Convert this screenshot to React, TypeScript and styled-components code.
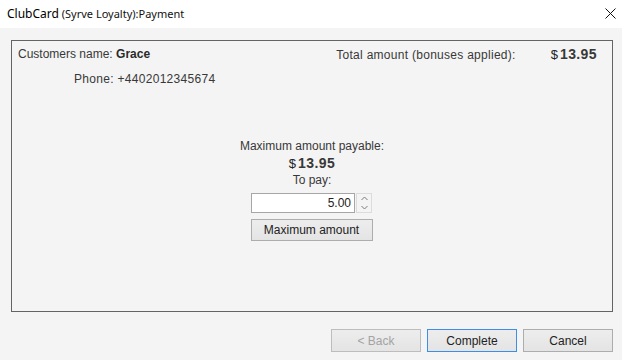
import styled, { createGlobalStyle } from "styled-components";

const GlobalStyle = createGlobalStyle`
  html, body {
    margin: 0;
    padding: 0;
    background: #f4f4f4;
  }
  body {
    font-family: "Liberation Sans", Arial, sans-serif;
    font-size: 12px;
    color: #383838;
  }
`;

function CloseIcon() {
  return (
    <svg width="11" height="11" viewBox="0 0 11 11">
      <path d="M0.5 0.5 L10.5 10.5 M10.5 0.5 L0.5 10.5" stroke="#111" strokeWidth="1" />
    </svg>
  );
}

function Money({ value }: { value: string }) {
  return (
    <Amount>
      <Currency>$</Currency>
      <AmountValue>{value}</AmountValue>
    </Amount>
  );
}

function App() {
  return (
    <Window>
      <GlobalStyle />
      <TitleBar>
        <Title>
          <AppName>ClubCard</AppName> (Syrve Loyalty):Payment
        </Title>
        <CloseButton>
          <CloseIcon />
        </CloseButton>
      </TitleBar>

      <Body>
        <Panel>
          <TopRow>
            <span>
              Customers name: <Strong>Grace</Strong>
            </span>
            <TotalBox>
              <TotalLabel>Total amount (bonuses applied):</TotalLabel>
              <Money value="13.95" />
            </TotalBox>
          </TopRow>
          <PhoneLine>Phone: +4402012345674</PhoneLine>

          <PayBlock>
            <Line>Maximum amount payable:</Line>
            <Line>
              <Money value="13.95" />
            </Line>
            <Line>To pay:</Line>
            <SpinRow>
              <NumberInput>5.00</NumberInput>
              <Spinner>
                <SpinArrow>
                  <svg width="7" height="5" viewBox="0 0 7 5">
                    <path d="M0.5 4 L3.5 1 L6.5 4" stroke="#7a7a7a" fill="none" />
                  </svg>
                </SpinArrow>
                <SpinArrow>
                  <svg width="7" height="5" viewBox="0 0 7 5">
                    <path d="M0.5 1 L3.5 4 L6.5 1" stroke="#7a7a7a" fill="none" />
                  </svg>
                </SpinArrow>
              </Spinner>
            </SpinRow>
            <MaxButton>Maximum amount</MaxButton>
          </PayBlock>
        </Panel>

        <Footer>
          <DialogButton disabled>&lt; Back</DialogButton>
          <DialogButton $primary>Complete</DialogButton>
          <DialogButton>Cancel</DialogButton>
        </Footer>
      </Body>
    </Window>
  );
}

export default App;

const Window = styled.div`
  width: 622px;
  height: 360px;
  display: flex;
  flex-direction: column;
  background: #f4f4f4;
  overflow: hidden;
`;

const TitleBar = styled.div`
  height: 28px;
  background: #fff;
  display: flex;
  align-items: center;
  justify-content: space-between;
  padding: 0 6px 0 7px;
  box-sizing: border-box;
`;

const Title = styled.div`
  font-family: "Noto Sans", "Open Sans", sans-serif;
  font-size: 11px;
  color: #111;
  margin-top: -2px;
`;

const AppName = styled.span`
  font-size: 12px;
  color: #000;
`;

const CloseButton = styled.div`
  width: 11px;
  height: 11px;
  margin-top: -2px;
  display: flex;
`;

const Body = styled.div`
  flex: 1;
  display: flex;
  flex-direction: column;
  padding: 12px 9px 0 11px;
`;

const Panel = styled.div`
  height: 272px;
  box-sizing: border-box;
  border: 1px solid #646464;
  padding: 5px 15px 0 6px;
  display: flex;
  flex-direction: column;
`;

const TopRow = styled.div`
  display: flex;
  justify-content: space-between;
  line-height: 16px;
`;

const Strong = styled.b`
  color: #2a2a2a;
`;

const TotalBox = styled.div`
  display: flex;
  align-items: center;
  gap: 35px;
`;

const TotalLabel = styled.span`
  letter-spacing: 0.28px;
`;

const Amount = styled.span`
  display: inline-flex;
  align-items: baseline;
  gap: 2px;
`;

const Currency = styled.span`
  font-size: 13px;
  color: #222;
`;

const AmountValue = styled.span`
  font-weight: bold;
  font-size: 14px;
  color: #383838;
  letter-spacing: 0.4px;
`;

const PhoneLine = styled.div`
  margin-top: 8px;
  padding-left: 56px;
  line-height: 16px;
  letter-spacing: 0.3px;
`;

const PayBlock = styled.div`
  margin-top: 51px;
  margin-right: -9px;
  display: flex;
  flex-direction: column;
  align-items: center;
`;

const Line = styled.div`
  line-height: 17px;
  height: 17px;
`;

const SpinRow = styled.div`
  margin-top: 4px;
  margin-left: -1px;
  display: flex;
  width: 121px;
  height: 20px;
`;

const NumberInput = styled.div`
  flex: 1;
  box-sizing: border-box;
  background: #fff;
  border: 1px solid #a6a6a6;
  text-align: right;
  padding-right: 3px;
  line-height: 18px;
  color: #222;
`;

const Spinner = styled.div`
  width: 16px;
  display: flex;
  flex-direction: column;
  margin-left: 1px;
`;

const SpinArrow = styled.div`
  flex: 1;
  display: flex;
  align-items: center;
  justify-content: center;
  border: 1px solid #dcdcdc;
  box-sizing: border-box;
  &:first-child {
    border-bottom: none;
  }
  &:last-child {
    border-top: none;
  }
`;

const MaxButton = styled.button`
  margin-top: 6px;
  margin-left: -1px;
  width: 122px;
  height: 22px;
  box-sizing: border-box;
  border: 1px solid #adadad;
  background: linear-gradient(#ededed, #e4e4e4);
  font-family: "Liberation Sans", Arial, sans-serif;
  font-size: 12px;
  color: #222;
  padding: 0;
`;

const Footer = styled.div`
  margin-top: 17px;
  display: flex;
  justify-content: flex-end;
  gap: 6px;
`;

const DialogButton = styled.button<{ $primary?: boolean }>`
  width: 90px;
  height: 23px;
  box-sizing: border-box;
  border: 1px solid ${(p) => (p.$primary ? "#3d8ee8" : "#adadad")};
  background: linear-gradient(#ededed, #e4e4e4);
  font-family: "Liberation Sans", Arial, sans-serif;
  font-size: 12px;
  color: #222;
  padding: 0;

  &:disabled {
    color: #a3a3a3;
    border-color: #bdbdbd;
  }
`;
